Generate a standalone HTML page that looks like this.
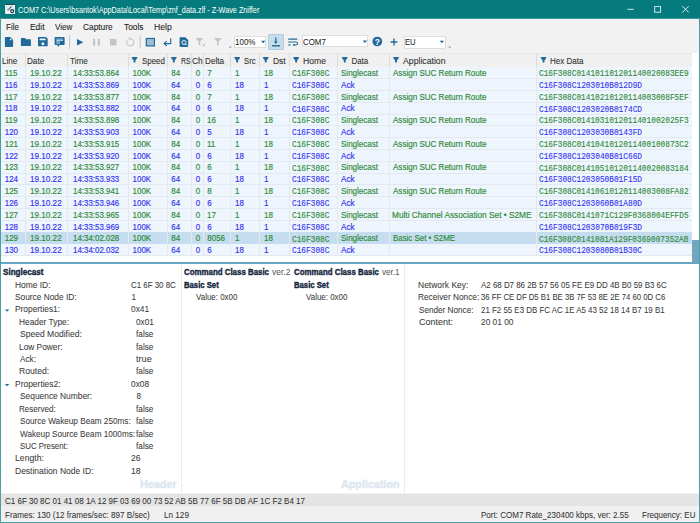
<!DOCTYPE html>
<html><head><meta charset="utf-8"><style>
html,body{margin:0;padding:0;width:700px;height:523px;overflow:hidden;position:relative;}
body>*{position:absolute;}
.t{white-space:pre;-webkit-text-stroke:0.15px currentColor;}
</style></head><body>
<div style="left:0.00px;top:0.00px;width:700.00px;height:523.00px;background:#f2f2f2;"></div>
<div style="left:0.00px;top:0.00px;width:700.00px;height:18.00px;background:#067b7d;"></div>
<div style="left:0.00px;top:18.00px;width:700.00px;height:1.00px;background:#3c9597;"></div>
<div class="t" style="left:18.26px;top:7px;font-size:7.6px;line-height:7.6px;color:#ffffff;font-weight:normal;font-family:'Liberation Sans', sans-serif;transform:scale(0.9562,1.18);transform-origin:0 6px;-webkit-text-stroke:0px currentColor;">COM7 C:\Users\bsantok\AppData\Local\Temp\znf_data.zlf - Z-Wave Zniffer</div>
<div class="t" style="left:6.41px;top:24px;font-size:8.2px;line-height:8.2px;color:#1e1e1e;font-weight:normal;font-family:'Liberation Sans', sans-serif;transform:scale(0.9760,1.1);transform-origin:0 6px;-webkit-text-stroke:0.08px currentColor;">File</div>
<div class="t" style="left:29.59px;top:24px;font-size:8.2px;line-height:8.2px;color:#1e1e1e;font-weight:normal;font-family:'Liberation Sans', sans-serif;transform:scale(1.0255,1.1);transform-origin:0 6px;-webkit-text-stroke:0.08px currentColor;">Edit</div>
<div class="t" style="left:55.10px;top:24px;font-size:8.2px;line-height:8.2px;color:#1e1e1e;font-weight:normal;font-family:'Liberation Sans', sans-serif;transform:scale(0.9803,1.1);transform-origin:0 6px;-webkit-text-stroke:0.08px currentColor;">View</div>
<div class="t" style="left:83.35px;top:24px;font-size:8.2px;line-height:8.2px;color:#1e1e1e;font-weight:normal;font-family:'Liberation Sans', sans-serif;transform:scale(1.0175,1.1);transform-origin:0 6px;-webkit-text-stroke:0.08px currentColor;">Capture</div>
<div class="t" style="left:124.10px;top:24px;font-size:8.2px;line-height:8.2px;color:#1e1e1e;font-weight:normal;font-family:'Liberation Sans', sans-serif;transform:scale(1.0158,1.1);transform-origin:0 6px;-webkit-text-stroke:0.08px currentColor;">Tools</div>
<div class="t" style="left:153.57px;top:24px;font-size:8.2px;line-height:8.2px;color:#1e1e1e;font-weight:normal;font-family:'Liberation Sans', sans-serif;transform:scale(1.0523,1.1);transform-origin:0 6px;-webkit-text-stroke:0.08px currentColor;">Help</div>
<div style="left:234.20px;top:35.50px;width:32.20px;height:12.90px;background:#ffffff;box-sizing:border-box;border:0.6px solid #dedede;"></div>
<div class="t" style="left:235.41px;top:39px;font-size:8.2px;line-height:8.2px;color:#262626;font-weight:normal;font-family:'Liberation Sans', sans-serif;transform:scale(0.9778,1.1);transform-origin:0 6px;-webkit-text-stroke:0.05px currentColor;">100%</div>
<div style="left:268.00px;top:34.20px;width:16.40px;height:15.50px;background:#c5dcea;box-sizing:border-box;border:0.6px solid #b3cde0;"></div>
<div style="left:302.10px;top:35.20px;width:66.10px;height:12.30px;background:#ffffff;box-sizing:border-box;border:0.6px solid #dedede;"></div>
<div class="t" style="left:302.86px;top:39px;font-size:8.2px;line-height:8.2px;color:#262626;font-weight:normal;font-family:'Liberation Sans', sans-serif;transform:scale(0.9634,1.1);transform-origin:0 6px;-webkit-text-stroke:0.05px currentColor;">COM7</div>
<div style="left:403.50px;top:35.50px;width:42.20px;height:13.00px;background:#ffffff;box-sizing:border-box;border:0.6px solid #dedede;"></div>
<div class="t" style="left:404.63px;top:39px;font-size:8.2px;line-height:8.2px;color:#262626;font-weight:normal;font-family:'Liberation Sans', sans-serif;transform:scale(0.9366,1.1);transform-origin:0 6px;-webkit-text-stroke:0.05px currentColor;">EU</div>
<div style="left:1.00px;top:52.70px;width:697.60px;height:209.00px;background:#ffffff;"></div>
<div style="left:1.00px;top:53.00px;width:690.80px;height:13.60px;background:#f0f0f0;box-sizing:border-box;border-top:1px solid #e8e8e8;"></div>
<div style="left:1.00px;top:66.60px;width:690.80px;height:11.81px;background:#eef5fc;"></div>
<div style="left:1.00px;top:78.41px;width:690.80px;height:11.81px;background:#eef5fc;"></div>
<div style="left:1.00px;top:90.22px;width:690.80px;height:11.81px;background:#eef5fc;"></div>
<div style="left:1.00px;top:102.03px;width:690.80px;height:11.81px;background:#eef5fc;"></div>
<div style="left:1.00px;top:113.84px;width:690.80px;height:11.81px;background:#eef5fc;"></div>
<div style="left:1.00px;top:125.65px;width:690.80px;height:11.81px;background:#eef5fc;"></div>
<div style="left:1.00px;top:137.46px;width:690.80px;height:11.81px;background:#eef5fc;"></div>
<div style="left:1.00px;top:149.27px;width:690.80px;height:11.81px;background:#eef5fc;"></div>
<div style="left:1.00px;top:161.08px;width:690.80px;height:11.81px;background:#eef5fc;"></div>
<div style="left:1.00px;top:172.89px;width:690.80px;height:11.81px;background:#eef5fc;"></div>
<div style="left:1.00px;top:184.70px;width:690.80px;height:11.81px;background:#eef5fc;"></div>
<div style="left:1.00px;top:196.51px;width:690.80px;height:11.81px;background:#eef5fc;"></div>
<div style="left:1.00px;top:208.32px;width:690.80px;height:11.81px;background:#eef5fc;"></div>
<div style="left:1.00px;top:220.13px;width:690.80px;height:11.81px;background:#eef5fc;"></div>
<div style="left:1.00px;top:231.94px;width:690.80px;height:11.81px;background:#c5ddee;"></div>
<div style="left:1.00px;top:243.75px;width:690.80px;height:11.81px;background:#eef5fc;"></div>
<div style="left:24.90px;top:54.00px;width:1.00px;height:12.60px;background:#dcdcdc;"></div>
<div style="left:24.90px;top:66.60px;width:1.00px;height:188.96px;background:#e2e9ef;"></div>
<div style="left:66.50px;top:54.00px;width:1.00px;height:12.60px;background:#dcdcdc;"></div>
<div style="left:66.50px;top:66.60px;width:1.00px;height:188.96px;background:#e2e9ef;"></div>
<div style="left:128.40px;top:54.00px;width:1.00px;height:12.60px;background:#dcdcdc;"></div>
<div style="left:128.40px;top:66.60px;width:1.00px;height:188.96px;background:#e2e9ef;"></div>
<div style="left:167.10px;top:54.00px;width:1.00px;height:12.60px;background:#dcdcdc;"></div>
<div style="left:167.10px;top:66.60px;width:1.00px;height:188.96px;background:#e2e9ef;"></div>
<div style="left:191.00px;top:54.00px;width:1.00px;height:12.60px;background:#dcdcdc;"></div>
<div style="left:191.00px;top:66.60px;width:1.00px;height:188.96px;background:#e2e9ef;"></div>
<div style="left:203.10px;top:54.00px;width:1.00px;height:12.60px;background:#dcdcdc;"></div>
<div style="left:203.10px;top:66.60px;width:1.00px;height:188.96px;background:#e2e9ef;"></div>
<div style="left:230.20px;top:54.00px;width:1.00px;height:12.60px;background:#dcdcdc;"></div>
<div style="left:230.20px;top:66.60px;width:1.00px;height:188.96px;background:#e2e9ef;"></div>
<div style="left:259.10px;top:54.00px;width:1.00px;height:12.60px;background:#dcdcdc;"></div>
<div style="left:259.10px;top:66.60px;width:1.00px;height:188.96px;background:#e2e9ef;"></div>
<div style="left:288.50px;top:54.00px;width:1.00px;height:12.60px;background:#dcdcdc;"></div>
<div style="left:288.50px;top:66.60px;width:1.00px;height:188.96px;background:#e2e9ef;"></div>
<div style="left:337.40px;top:54.00px;width:1.00px;height:12.60px;background:#dcdcdc;"></div>
<div style="left:337.40px;top:66.60px;width:1.00px;height:188.96px;background:#e2e9ef;"></div>
<div style="left:388.90px;top:54.00px;width:1.00px;height:12.60px;background:#dcdcdc;"></div>
<div style="left:388.90px;top:66.60px;width:1.00px;height:188.96px;background:#e2e9ef;"></div>
<div style="left:536.40px;top:54.00px;width:1.00px;height:12.60px;background:#dcdcdc;"></div>
<div style="left:536.40px;top:66.60px;width:1.00px;height:188.96px;background:#e2e9ef;"></div>
<div style="left:1.00px;top:78.11px;width:690.80px;height:1.00px;background:#e2e9ef;"></div>
<div style="left:1.00px;top:89.92px;width:690.80px;height:1.00px;background:#e2e9ef;"></div>
<div style="left:1.00px;top:101.73px;width:690.80px;height:1.00px;background:#e2e9ef;"></div>
<div style="left:1.00px;top:113.54px;width:690.80px;height:1.00px;background:#e2e9ef;"></div>
<div style="left:1.00px;top:125.35px;width:690.80px;height:1.00px;background:#e2e9ef;"></div>
<div style="left:1.00px;top:137.16px;width:690.80px;height:1.00px;background:#e2e9ef;"></div>
<div style="left:1.00px;top:148.97px;width:690.80px;height:1.00px;background:#e2e9ef;"></div>
<div style="left:1.00px;top:160.78px;width:690.80px;height:1.00px;background:#e2e9ef;"></div>
<div style="left:1.00px;top:172.59px;width:690.80px;height:1.00px;background:#e2e9ef;"></div>
<div style="left:1.00px;top:184.40px;width:690.80px;height:1.00px;background:#e2e9ef;"></div>
<div style="left:1.00px;top:196.21px;width:690.80px;height:1.00px;background:#e2e9ef;"></div>
<div style="left:1.00px;top:208.02px;width:690.80px;height:1.00px;background:#e2e9ef;"></div>
<div style="left:1.00px;top:219.83px;width:690.80px;height:1.00px;background:#e2e9ef;"></div>
<div style="left:1.00px;top:255.26px;width:690.80px;height:1.00px;background:#e2e9ef;"></div>
<div class="t" style="left:1.69px;top:58px;font-size:8px;line-height:8px;color:#303030;font-weight:normal;font-family:'Liberation Sans', sans-serif;transform:scale(1.0138,1.14);transform-origin:0 6px;-webkit-text-stroke:0.08px currentColor;">Line</div>
<div class="t" style="left:27.09px;top:58px;font-size:8px;line-height:8px;color:#303030;font-weight:normal;font-family:'Liberation Sans', sans-serif;transform:scale(1.0154,1.14);transform-origin:0 6px;-webkit-text-stroke:0.08px currentColor;">Date</div>
<div class="t" style="left:69.80px;top:58px;font-size:8px;line-height:8px;color:#303030;font-weight:normal;font-family:'Liberation Sans', sans-serif;transform:scale(1.0203,1.14);transform-origin:0 6px;-webkit-text-stroke:0.08px currentColor;">Time</div>
<div class="t" style="left:141.65px;top:58px;font-size:8px;line-height:8px;color:#303030;font-weight:normal;font-family:'Liberation Sans', sans-serif;transform:scale(0.9911,1.14);transform-origin:0 6px;-webkit-text-stroke:0.08px currentColor;">Speed</div>
<div class="t" style="left:180.77px;top:58px;font-size:8px;line-height:8px;color:#303030;font-weight:normal;font-family:'Liberation Sans', sans-serif;transform:scale(0.8683,1.14);transform-origin:0 6px;-webkit-text-stroke:0.08px currentColor;">RS</div>
<div class="t" style="left:243.86px;top:58px;font-size:8px;line-height:8px;color:#303030;font-weight:normal;font-family:'Liberation Sans', sans-serif;transform:scale(0.9652,1.14);transform-origin:0 6px;-webkit-text-stroke:0.08px currentColor;">Src</div>
<div class="t" style="left:272.87px;top:58px;font-size:8px;line-height:8px;color:#303030;font-weight:normal;font-family:'Liberation Sans', sans-serif;transform:scale(1.0522,1.14);transform-origin:0 6px;-webkit-text-stroke:0.08px currentColor;">Dst</div>
<div class="t" style="left:302.86px;top:58px;font-size:8px;line-height:8px;color:#303030;font-weight:normal;font-family:'Liberation Sans', sans-serif;transform:scale(1.0780,1.14);transform-origin:0 6px;-webkit-text-stroke:0.08px currentColor;">Home</div>
<div class="t" style="left:351.40px;top:58px;font-size:8px;line-height:8px;color:#303030;font-weight:normal;font-family:'Liberation Sans', sans-serif;transform:scale(1.0000,1.14);transform-origin:0 6px;-webkit-text-stroke:0.08px currentColor;">Data</div>
<div class="t" style="left:403.40px;top:58px;font-size:8px;line-height:8px;color:#303030;font-weight:normal;font-family:'Liberation Sans', sans-serif;transform:scale(1.0865,1.14);transform-origin:0 6px;-webkit-text-stroke:0.08px currentColor;">Application</div>
<div class="t" style="left:550.40px;top:58px;font-size:8px;line-height:8px;color:#303030;font-weight:normal;font-family:'Liberation Sans', sans-serif;transform:scale(1.0061,1.14);transform-origin:0 6px;-webkit-text-stroke:0.08px currentColor;">Hex Data</div>
<div class="t" style="left:192.34px;top:58px;font-size:8px;line-height:8px;color:#303030;font-weight:normal;font-family:'Liberation Sans', sans-serif;transform:scale(1.0526,1.14);transform-origin:0 6px;-webkit-text-stroke:0.08px currentColor;">Ch</div>
<div class="t" style="left:204.99px;top:58px;font-size:8px;line-height:8px;color:#303030;font-weight:normal;font-family:'Liberation Sans', sans-serif;transform:scale(1.0192,1.14);transform-origin:0 6px;-webkit-text-stroke:0.08px currentColor;">Delta</div>
<div class="t" style="left:4.70px;top:70px;font-size:8.0px;line-height:8.0px;color:#2f8a3a;font-weight:normal;font-family:'Liberation Sans', sans-serif;transform:scale(1.0000,1.1);transform-origin:0 6px;">115</div>
<div class="t" style="left:29.99px;top:70px;font-size:8.0px;line-height:8.0px;color:#2f8a3a;font-weight:normal;font-family:'Liberation Sans', sans-serif;transform:scale(1.0165,1.1);transform-origin:0 6px;">19.10.22</div>
<div class="t" style="left:72.51px;top:70px;font-size:8.0px;line-height:8.0px;color:#2f8a3a;font-weight:normal;font-family:'Liberation Sans', sans-serif;transform:scale(0.9891,1.1);transform-origin:0 6px;">14:33:53.864</div>
<div class="t" style="left:132.50px;top:70px;font-size:8.0px;line-height:8.0px;color:#2f8a3a;font-weight:normal;font-family:'Liberation Sans', sans-serif;transform:scale(1.0000,1.1);transform-origin:0 6px;">100K</div>
<div class="t" style="left:171.25px;top:70px;font-size:8.0px;line-height:8.0px;color:#2f8a3a;font-weight:normal;font-family:'Liberation Sans', sans-serif;transform:scale(1.0000,1.1);transform-origin:0 6px;">84</div>
<div class="t" style="left:195.65px;top:70px;font-size:8.0px;line-height:8.0px;color:#2f8a3a;font-weight:normal;font-family:'Liberation Sans', sans-serif;transform:scale(1.0000,1.1);transform-origin:0 6px;">0</div>
<div class="t" style="left:207.25px;top:70px;font-size:8.0px;line-height:8.0px;color:#2f8a3a;font-weight:normal;font-family:'Liberation Sans', sans-serif;transform:scale(1.0000,1.1);transform-origin:0 6px;">7</div>
<div class="t" style="left:235.00px;top:70px;font-size:8.0px;line-height:8.0px;color:#2f8a3a;font-weight:normal;font-family:'Liberation Sans', sans-serif;transform:scale(1.0000,1.1);transform-origin:0 6px;">1</div>
<div class="t" style="left:264.00px;top:70px;font-size:8.0px;line-height:8.0px;color:#2f8a3a;font-weight:normal;font-family:'Liberation Sans', sans-serif;transform:scale(1.0000,1.1);transform-origin:0 6px;">18</div>
<div class="t" style="left:292.15px;top:71px;font-size:7.77px;line-height:7.77px;color:#2f8a3a;font-weight:normal;font-family:'Liberation Mono', monospace;transform:scale(1.0041,1.12);transform-origin:0 5px;-webkit-text-stroke:0.1px currentColor;">C16F308C</div>
<div class="t" style="left:340.95px;top:70px;font-size:8.0px;line-height:8.0px;color:#2f8a3a;font-weight:normal;font-family:'Liberation Sans', sans-serif;transform:scale(1.0041,1.1);transform-origin:0 6px;">Singlecast</div>
<div class="t" style="left:393.00px;top:70px;font-size:8.0px;line-height:8.0px;color:#2f8a3a;font-weight:normal;font-family:'Liberation Sans', sans-serif;transform:scale(1.0054,1.1);transform-origin:0 6px;">Assign SUC Return Route</div>
<div class="t" style="left:539.35px;top:71px;font-size:7.77px;line-height:7.77px;color:#2f8a3a;font-weight:normal;font-family:'Liberation Mono', monospace;transform:scale(1.0034,1.12);transform-origin:0 5px;-webkit-text-stroke:0.1px currentColor;">C16F308C014101101201140020083EE9</div>
<div class="t" style="left:4.70px;top:82px;font-size:8.0px;line-height:8.0px;color:#3636f0;font-weight:normal;font-family:'Liberation Sans', sans-serif;transform:scale(1.0000,1.1);transform-origin:0 6px;">116</div>
<div class="t" style="left:29.99px;top:82px;font-size:8.0px;line-height:8.0px;color:#3636f0;font-weight:normal;font-family:'Liberation Sans', sans-serif;transform:scale(1.0165,1.1);transform-origin:0 6px;">19.10.22</div>
<div class="t" style="left:72.51px;top:82px;font-size:8.0px;line-height:8.0px;color:#3636f0;font-weight:normal;font-family:'Liberation Sans', sans-serif;transform:scale(0.9891,1.1);transform-origin:0 6px;">14:33:53.869</div>
<div class="t" style="left:132.50px;top:82px;font-size:8.0px;line-height:8.0px;color:#3636f0;font-weight:normal;font-family:'Liberation Sans', sans-serif;transform:scale(1.0000,1.1);transform-origin:0 6px;">100K</div>
<div class="t" style="left:171.25px;top:82px;font-size:8.0px;line-height:8.0px;color:#3636f0;font-weight:normal;font-family:'Liberation Sans', sans-serif;transform:scale(1.0000,1.1);transform-origin:0 6px;">64</div>
<div class="t" style="left:195.65px;top:82px;font-size:8.0px;line-height:8.0px;color:#3636f0;font-weight:normal;font-family:'Liberation Sans', sans-serif;transform:scale(1.0000,1.1);transform-origin:0 6px;">0</div>
<div class="t" style="left:207.25px;top:82px;font-size:8.0px;line-height:8.0px;color:#3636f0;font-weight:normal;font-family:'Liberation Sans', sans-serif;transform:scale(1.0000,1.1);transform-origin:0 6px;">6</div>
<div class="t" style="left:235.00px;top:82px;font-size:8.0px;line-height:8.0px;color:#3636f0;font-weight:normal;font-family:'Liberation Sans', sans-serif;transform:scale(1.0000,1.1);transform-origin:0 6px;">18</div>
<div class="t" style="left:264.00px;top:82px;font-size:8.0px;line-height:8.0px;color:#3636f0;font-weight:normal;font-family:'Liberation Sans', sans-serif;transform:scale(1.0000,1.1);transform-origin:0 6px;">1</div>
<div class="t" style="left:292.15px;top:83px;font-size:7.77px;line-height:7.77px;color:#3636f0;font-weight:normal;font-family:'Liberation Mono', monospace;transform:scale(1.0041,1.12);transform-origin:0 5px;-webkit-text-stroke:0.1px currentColor;">C16F308C</div>
<div class="t" style="left:341.20px;top:82px;font-size:8.0px;line-height:8.0px;color:#3636f0;font-weight:normal;font-family:'Liberation Sans', sans-serif;transform:scale(1.0189,1.1);transform-origin:0 6px;">Ack</div>
<div class="t" style="left:539.35px;top:83px;font-size:7.77px;line-height:7.77px;color:#3636f0;font-weight:normal;font-family:'Liberation Mono', monospace;transform:scale(1.0049,1.12);transform-origin:0 5px;-webkit-text-stroke:0.1px currentColor;">C16F308C1203010B012D9D</div>
<div class="t" style="left:4.70px;top:94px;font-size:8.0px;line-height:8.0px;color:#2f8a3a;font-weight:normal;font-family:'Liberation Sans', sans-serif;transform:scale(1.0000,1.1);transform-origin:0 6px;">117</div>
<div class="t" style="left:29.99px;top:94px;font-size:8.0px;line-height:8.0px;color:#2f8a3a;font-weight:normal;font-family:'Liberation Sans', sans-serif;transform:scale(1.0165,1.1);transform-origin:0 6px;">19.10.22</div>
<div class="t" style="left:72.51px;top:94px;font-size:8.0px;line-height:8.0px;color:#2f8a3a;font-weight:normal;font-family:'Liberation Sans', sans-serif;transform:scale(0.9891,1.1);transform-origin:0 6px;">14:33:53.877</div>
<div class="t" style="left:132.50px;top:94px;font-size:8.0px;line-height:8.0px;color:#2f8a3a;font-weight:normal;font-family:'Liberation Sans', sans-serif;transform:scale(1.0000,1.1);transform-origin:0 6px;">100K</div>
<div class="t" style="left:171.25px;top:94px;font-size:8.0px;line-height:8.0px;color:#2f8a3a;font-weight:normal;font-family:'Liberation Sans', sans-serif;transform:scale(1.0000,1.1);transform-origin:0 6px;">84</div>
<div class="t" style="left:195.65px;top:94px;font-size:8.0px;line-height:8.0px;color:#2f8a3a;font-weight:normal;font-family:'Liberation Sans', sans-serif;transform:scale(1.0000,1.1);transform-origin:0 6px;">0</div>
<div class="t" style="left:207.25px;top:94px;font-size:8.0px;line-height:8.0px;color:#2f8a3a;font-weight:normal;font-family:'Liberation Sans', sans-serif;transform:scale(1.0000,1.1);transform-origin:0 6px;">7</div>
<div class="t" style="left:235.00px;top:94px;font-size:8.0px;line-height:8.0px;color:#2f8a3a;font-weight:normal;font-family:'Liberation Sans', sans-serif;transform:scale(1.0000,1.1);transform-origin:0 6px;">1</div>
<div class="t" style="left:264.00px;top:94px;font-size:8.0px;line-height:8.0px;color:#2f8a3a;font-weight:normal;font-family:'Liberation Sans', sans-serif;transform:scale(1.0000,1.1);transform-origin:0 6px;">18</div>
<div class="t" style="left:292.15px;top:95px;font-size:7.77px;line-height:7.77px;color:#2f8a3a;font-weight:normal;font-family:'Liberation Mono', monospace;transform:scale(1.0041,1.12);transform-origin:0 5px;-webkit-text-stroke:0.1px currentColor;">C16F308C</div>
<div class="t" style="left:340.95px;top:94px;font-size:8.0px;line-height:8.0px;color:#2f8a3a;font-weight:normal;font-family:'Liberation Sans', sans-serif;transform:scale(1.0041,1.1);transform-origin:0 6px;">Singlecast</div>
<div class="t" style="left:393.00px;top:94px;font-size:8.0px;line-height:8.0px;color:#2f8a3a;font-weight:normal;font-family:'Liberation Sans', sans-serif;transform:scale(1.0054,1.1);transform-origin:0 6px;">Assign SUC Return Route</div>
<div class="t" style="left:539.35px;top:95px;font-size:7.77px;line-height:7.77px;color:#2f8a3a;font-weight:normal;font-family:'Liberation Mono', monospace;transform:scale(1.0034,1.12);transform-origin:0 5px;-webkit-text-stroke:0.1px currentColor;">C16F308C01410210120114003008F5EF</div>
<div class="t" style="left:4.70px;top:105px;font-size:8.0px;line-height:8.0px;color:#3636f0;font-weight:normal;font-family:'Liberation Sans', sans-serif;transform:scale(1.0000,1.1);transform-origin:0 6px;">118</div>
<div class="t" style="left:29.99px;top:105px;font-size:8.0px;line-height:8.0px;color:#3636f0;font-weight:normal;font-family:'Liberation Sans', sans-serif;transform:scale(1.0165,1.1);transform-origin:0 6px;">19.10.22</div>
<div class="t" style="left:72.51px;top:105px;font-size:8.0px;line-height:8.0px;color:#3636f0;font-weight:normal;font-family:'Liberation Sans', sans-serif;transform:scale(0.9891,1.1);transform-origin:0 6px;">14:33:53.882</div>
<div class="t" style="left:132.50px;top:105px;font-size:8.0px;line-height:8.0px;color:#3636f0;font-weight:normal;font-family:'Liberation Sans', sans-serif;transform:scale(1.0000,1.1);transform-origin:0 6px;">100K</div>
<div class="t" style="left:171.25px;top:105px;font-size:8.0px;line-height:8.0px;color:#3636f0;font-weight:normal;font-family:'Liberation Sans', sans-serif;transform:scale(1.0000,1.1);transform-origin:0 6px;">64</div>
<div class="t" style="left:195.65px;top:105px;font-size:8.0px;line-height:8.0px;color:#3636f0;font-weight:normal;font-family:'Liberation Sans', sans-serif;transform:scale(1.0000,1.1);transform-origin:0 6px;">0</div>
<div class="t" style="left:207.25px;top:105px;font-size:8.0px;line-height:8.0px;color:#3636f0;font-weight:normal;font-family:'Liberation Sans', sans-serif;transform:scale(1.0000,1.1);transform-origin:0 6px;">6</div>
<div class="t" style="left:235.00px;top:105px;font-size:8.0px;line-height:8.0px;color:#3636f0;font-weight:normal;font-family:'Liberation Sans', sans-serif;transform:scale(1.0000,1.1);transform-origin:0 6px;">18</div>
<div class="t" style="left:264.00px;top:105px;font-size:8.0px;line-height:8.0px;color:#3636f0;font-weight:normal;font-family:'Liberation Sans', sans-serif;transform:scale(1.0000,1.1);transform-origin:0 6px;">1</div>
<div class="t" style="left:292.15px;top:107px;font-size:7.77px;line-height:7.77px;color:#3636f0;font-weight:normal;font-family:'Liberation Mono', monospace;transform:scale(1.0041,1.12);transform-origin:0 5px;-webkit-text-stroke:0.1px currentColor;">C16F308C</div>
<div class="t" style="left:341.20px;top:105px;font-size:8.0px;line-height:8.0px;color:#3636f0;font-weight:normal;font-family:'Liberation Sans', sans-serif;transform:scale(1.0189,1.1);transform-origin:0 6px;">Ack</div>
<div class="t" style="left:539.35px;top:107px;font-size:7.77px;line-height:7.77px;color:#3636f0;font-weight:normal;font-family:'Liberation Mono', monospace;transform:scale(1.0049,1.12);transform-origin:0 5px;-webkit-text-stroke:0.1px currentColor;">C16F308C1203020B0174CD</div>
<div class="t" style="left:4.70px;top:117px;font-size:8.0px;line-height:8.0px;color:#2f8a3a;font-weight:normal;font-family:'Liberation Sans', sans-serif;transform:scale(1.0000,1.1);transform-origin:0 6px;">119</div>
<div class="t" style="left:29.99px;top:117px;font-size:8.0px;line-height:8.0px;color:#2f8a3a;font-weight:normal;font-family:'Liberation Sans', sans-serif;transform:scale(1.0165,1.1);transform-origin:0 6px;">19.10.22</div>
<div class="t" style="left:72.51px;top:117px;font-size:8.0px;line-height:8.0px;color:#2f8a3a;font-weight:normal;font-family:'Liberation Sans', sans-serif;transform:scale(0.9891,1.1);transform-origin:0 6px;">14:33:53.898</div>
<div class="t" style="left:132.50px;top:117px;font-size:8.0px;line-height:8.0px;color:#2f8a3a;font-weight:normal;font-family:'Liberation Sans', sans-serif;transform:scale(1.0000,1.1);transform-origin:0 6px;">100K</div>
<div class="t" style="left:171.25px;top:117px;font-size:8.0px;line-height:8.0px;color:#2f8a3a;font-weight:normal;font-family:'Liberation Sans', sans-serif;transform:scale(1.0000,1.1);transform-origin:0 6px;">84</div>
<div class="t" style="left:195.65px;top:117px;font-size:8.0px;line-height:8.0px;color:#2f8a3a;font-weight:normal;font-family:'Liberation Sans', sans-serif;transform:scale(1.0000,1.1);transform-origin:0 6px;">0</div>
<div class="t" style="left:207.00px;top:117px;font-size:8.0px;line-height:8.0px;color:#2f8a3a;font-weight:normal;font-family:'Liberation Sans', sans-serif;transform:scale(1.0000,1.1);transform-origin:0 6px;">16</div>
<div class="t" style="left:235.00px;top:117px;font-size:8.0px;line-height:8.0px;color:#2f8a3a;font-weight:normal;font-family:'Liberation Sans', sans-serif;transform:scale(1.0000,1.1);transform-origin:0 6px;">1</div>
<div class="t" style="left:264.00px;top:117px;font-size:8.0px;line-height:8.0px;color:#2f8a3a;font-weight:normal;font-family:'Liberation Sans', sans-serif;transform:scale(1.0000,1.1);transform-origin:0 6px;">18</div>
<div class="t" style="left:292.15px;top:118px;font-size:7.77px;line-height:7.77px;color:#2f8a3a;font-weight:normal;font-family:'Liberation Mono', monospace;transform:scale(1.0041,1.12);transform-origin:0 5px;-webkit-text-stroke:0.1px currentColor;">C16F308C</div>
<div class="t" style="left:340.95px;top:117px;font-size:8.0px;line-height:8.0px;color:#2f8a3a;font-weight:normal;font-family:'Liberation Sans', sans-serif;transform:scale(1.0041,1.1);transform-origin:0 6px;">Singlecast</div>
<div class="t" style="left:393.00px;top:117px;font-size:8.0px;line-height:8.0px;color:#2f8a3a;font-weight:normal;font-family:'Liberation Sans', sans-serif;transform:scale(1.0054,1.1);transform-origin:0 6px;">Assign SUC Return Route</div>
<div class="t" style="left:539.35px;top:118px;font-size:7.77px;line-height:7.77px;color:#2f8a3a;font-weight:normal;font-family:'Liberation Mono', monospace;transform:scale(1.0034,1.12);transform-origin:0 5px;-webkit-text-stroke:0.1px currentColor;">C16F308C0141031012011401002025F3</div>
<div class="t" style="left:4.70px;top:129px;font-size:8.0px;line-height:8.0px;color:#3636f0;font-weight:normal;font-family:'Liberation Sans', sans-serif;transform:scale(1.0000,1.1);transform-origin:0 6px;">120</div>
<div class="t" style="left:29.99px;top:129px;font-size:8.0px;line-height:8.0px;color:#3636f0;font-weight:normal;font-family:'Liberation Sans', sans-serif;transform:scale(1.0165,1.1);transform-origin:0 6px;">19.10.22</div>
<div class="t" style="left:72.51px;top:129px;font-size:8.0px;line-height:8.0px;color:#3636f0;font-weight:normal;font-family:'Liberation Sans', sans-serif;transform:scale(0.9891,1.1);transform-origin:0 6px;">14:33:53.903</div>
<div class="t" style="left:132.50px;top:129px;font-size:8.0px;line-height:8.0px;color:#3636f0;font-weight:normal;font-family:'Liberation Sans', sans-serif;transform:scale(1.0000,1.1);transform-origin:0 6px;">100K</div>
<div class="t" style="left:171.25px;top:129px;font-size:8.0px;line-height:8.0px;color:#3636f0;font-weight:normal;font-family:'Liberation Sans', sans-serif;transform:scale(1.0000,1.1);transform-origin:0 6px;">64</div>
<div class="t" style="left:195.65px;top:129px;font-size:8.0px;line-height:8.0px;color:#3636f0;font-weight:normal;font-family:'Liberation Sans', sans-serif;transform:scale(1.0000,1.1);transform-origin:0 6px;">0</div>
<div class="t" style="left:207.25px;top:129px;font-size:8.0px;line-height:8.0px;color:#3636f0;font-weight:normal;font-family:'Liberation Sans', sans-serif;transform:scale(1.0000,1.1);transform-origin:0 6px;">5</div>
<div class="t" style="left:235.00px;top:129px;font-size:8.0px;line-height:8.0px;color:#3636f0;font-weight:normal;font-family:'Liberation Sans', sans-serif;transform:scale(1.0000,1.1);transform-origin:0 6px;">18</div>
<div class="t" style="left:264.00px;top:129px;font-size:8.0px;line-height:8.0px;color:#3636f0;font-weight:normal;font-family:'Liberation Sans', sans-serif;transform:scale(1.0000,1.1);transform-origin:0 6px;">1</div>
<div class="t" style="left:292.15px;top:130px;font-size:7.77px;line-height:7.77px;color:#3636f0;font-weight:normal;font-family:'Liberation Mono', monospace;transform:scale(1.0041,1.12);transform-origin:0 5px;-webkit-text-stroke:0.1px currentColor;">C16F308C</div>
<div class="t" style="left:341.20px;top:129px;font-size:8.0px;line-height:8.0px;color:#3636f0;font-weight:normal;font-family:'Liberation Sans', sans-serif;transform:scale(1.0189,1.1);transform-origin:0 6px;">Ack</div>
<div class="t" style="left:539.35px;top:130px;font-size:7.77px;line-height:7.77px;color:#3636f0;font-weight:normal;font-family:'Liberation Mono', monospace;transform:scale(1.0049,1.12);transform-origin:0 5px;-webkit-text-stroke:0.1px currentColor;">C16F308C1203030B0143FD</div>
<div class="t" style="left:4.70px;top:141px;font-size:8.0px;line-height:8.0px;color:#2f8a3a;font-weight:normal;font-family:'Liberation Sans', sans-serif;transform:scale(1.0000,1.1);transform-origin:0 6px;">121</div>
<div class="t" style="left:29.99px;top:141px;font-size:8.0px;line-height:8.0px;color:#2f8a3a;font-weight:normal;font-family:'Liberation Sans', sans-serif;transform:scale(1.0165,1.1);transform-origin:0 6px;">19.10.22</div>
<div class="t" style="left:72.51px;top:141px;font-size:8.0px;line-height:8.0px;color:#2f8a3a;font-weight:normal;font-family:'Liberation Sans', sans-serif;transform:scale(0.9891,1.1);transform-origin:0 6px;">14:33:53.915</div>
<div class="t" style="left:132.50px;top:141px;font-size:8.0px;line-height:8.0px;color:#2f8a3a;font-weight:normal;font-family:'Liberation Sans', sans-serif;transform:scale(1.0000,1.1);transform-origin:0 6px;">100K</div>
<div class="t" style="left:171.25px;top:141px;font-size:8.0px;line-height:8.0px;color:#2f8a3a;font-weight:normal;font-family:'Liberation Sans', sans-serif;transform:scale(1.0000,1.1);transform-origin:0 6px;">84</div>
<div class="t" style="left:195.65px;top:141px;font-size:8.0px;line-height:8.0px;color:#2f8a3a;font-weight:normal;font-family:'Liberation Sans', sans-serif;transform:scale(1.0000,1.1);transform-origin:0 6px;">0</div>
<div class="t" style="left:207.00px;top:141px;font-size:8.0px;line-height:8.0px;color:#2f8a3a;font-weight:normal;font-family:'Liberation Sans', sans-serif;transform:scale(1.0000,1.1);transform-origin:0 6px;">11</div>
<div class="t" style="left:235.00px;top:141px;font-size:8.0px;line-height:8.0px;color:#2f8a3a;font-weight:normal;font-family:'Liberation Sans', sans-serif;transform:scale(1.0000,1.1);transform-origin:0 6px;">1</div>
<div class="t" style="left:264.00px;top:141px;font-size:8.0px;line-height:8.0px;color:#2f8a3a;font-weight:normal;font-family:'Liberation Sans', sans-serif;transform:scale(1.0000,1.1);transform-origin:0 6px;">18</div>
<div class="t" style="left:292.15px;top:142px;font-size:7.77px;line-height:7.77px;color:#2f8a3a;font-weight:normal;font-family:'Liberation Mono', monospace;transform:scale(1.0041,1.12);transform-origin:0 5px;-webkit-text-stroke:0.1px currentColor;">C16F308C</div>
<div class="t" style="left:340.95px;top:141px;font-size:8.0px;line-height:8.0px;color:#2f8a3a;font-weight:normal;font-family:'Liberation Sans', sans-serif;transform:scale(1.0041,1.1);transform-origin:0 6px;">Singlecast</div>
<div class="t" style="left:393.00px;top:141px;font-size:8.0px;line-height:8.0px;color:#2f8a3a;font-weight:normal;font-family:'Liberation Sans', sans-serif;transform:scale(1.0054,1.1);transform-origin:0 6px;">Assign SUC Return Route</div>
<div class="t" style="left:539.35px;top:142px;font-size:7.77px;line-height:7.77px;color:#2f8a3a;font-weight:normal;font-family:'Liberation Mono', monospace;transform:scale(1.0034,1.12);transform-origin:0 5px;-webkit-text-stroke:0.1px currentColor;">C16F308C0141041012011400100873C2</div>
<div class="t" style="left:4.70px;top:153px;font-size:8.0px;line-height:8.0px;color:#3636f0;font-weight:normal;font-family:'Liberation Sans', sans-serif;transform:scale(1.0000,1.1);transform-origin:0 6px;">122</div>
<div class="t" style="left:29.99px;top:153px;font-size:8.0px;line-height:8.0px;color:#3636f0;font-weight:normal;font-family:'Liberation Sans', sans-serif;transform:scale(1.0165,1.1);transform-origin:0 6px;">19.10.22</div>
<div class="t" style="left:72.51px;top:153px;font-size:8.0px;line-height:8.0px;color:#3636f0;font-weight:normal;font-family:'Liberation Sans', sans-serif;transform:scale(0.9891,1.1);transform-origin:0 6px;">14:33:53.920</div>
<div class="t" style="left:132.50px;top:153px;font-size:8.0px;line-height:8.0px;color:#3636f0;font-weight:normal;font-family:'Liberation Sans', sans-serif;transform:scale(1.0000,1.1);transform-origin:0 6px;">100K</div>
<div class="t" style="left:171.25px;top:153px;font-size:8.0px;line-height:8.0px;color:#3636f0;font-weight:normal;font-family:'Liberation Sans', sans-serif;transform:scale(1.0000,1.1);transform-origin:0 6px;">64</div>
<div class="t" style="left:195.65px;top:153px;font-size:8.0px;line-height:8.0px;color:#3636f0;font-weight:normal;font-family:'Liberation Sans', sans-serif;transform:scale(1.0000,1.1);transform-origin:0 6px;">0</div>
<div class="t" style="left:207.25px;top:153px;font-size:8.0px;line-height:8.0px;color:#3636f0;font-weight:normal;font-family:'Liberation Sans', sans-serif;transform:scale(1.0000,1.1);transform-origin:0 6px;">6</div>
<div class="t" style="left:235.00px;top:153px;font-size:8.0px;line-height:8.0px;color:#3636f0;font-weight:normal;font-family:'Liberation Sans', sans-serif;transform:scale(1.0000,1.1);transform-origin:0 6px;">18</div>
<div class="t" style="left:264.00px;top:153px;font-size:8.0px;line-height:8.0px;color:#3636f0;font-weight:normal;font-family:'Liberation Sans', sans-serif;transform:scale(1.0000,1.1);transform-origin:0 6px;">1</div>
<div class="t" style="left:292.15px;top:154px;font-size:7.77px;line-height:7.77px;color:#3636f0;font-weight:normal;font-family:'Liberation Mono', monospace;transform:scale(1.0041,1.12);transform-origin:0 5px;-webkit-text-stroke:0.1px currentColor;">C16F308C</div>
<div class="t" style="left:341.20px;top:153px;font-size:8.0px;line-height:8.0px;color:#3636f0;font-weight:normal;font-family:'Liberation Sans', sans-serif;transform:scale(1.0189,1.1);transform-origin:0 6px;">Ack</div>
<div class="t" style="left:539.35px;top:154px;font-size:7.77px;line-height:7.77px;color:#3636f0;font-weight:normal;font-family:'Liberation Mono', monospace;transform:scale(1.0049,1.12);transform-origin:0 5px;-webkit-text-stroke:0.1px currentColor;">C16F308C1203040B01C66D</div>
<div class="t" style="left:4.70px;top:164px;font-size:8.0px;line-height:8.0px;color:#2f8a3a;font-weight:normal;font-family:'Liberation Sans', sans-serif;transform:scale(1.0000,1.1);transform-origin:0 6px;">123</div>
<div class="t" style="left:29.99px;top:164px;font-size:8.0px;line-height:8.0px;color:#2f8a3a;font-weight:normal;font-family:'Liberation Sans', sans-serif;transform:scale(1.0165,1.1);transform-origin:0 6px;">19.10.22</div>
<div class="t" style="left:72.51px;top:164px;font-size:8.0px;line-height:8.0px;color:#2f8a3a;font-weight:normal;font-family:'Liberation Sans', sans-serif;transform:scale(0.9891,1.1);transform-origin:0 6px;">14:33:53.927</div>
<div class="t" style="left:132.50px;top:164px;font-size:8.0px;line-height:8.0px;color:#2f8a3a;font-weight:normal;font-family:'Liberation Sans', sans-serif;transform:scale(1.0000,1.1);transform-origin:0 6px;">100K</div>
<div class="t" style="left:171.25px;top:164px;font-size:8.0px;line-height:8.0px;color:#2f8a3a;font-weight:normal;font-family:'Liberation Sans', sans-serif;transform:scale(1.0000,1.1);transform-origin:0 6px;">84</div>
<div class="t" style="left:195.65px;top:164px;font-size:8.0px;line-height:8.0px;color:#2f8a3a;font-weight:normal;font-family:'Liberation Sans', sans-serif;transform:scale(1.0000,1.1);transform-origin:0 6px;">0</div>
<div class="t" style="left:207.25px;top:164px;font-size:8.0px;line-height:8.0px;color:#2f8a3a;font-weight:normal;font-family:'Liberation Sans', sans-serif;transform:scale(1.0000,1.1);transform-origin:0 6px;">6</div>
<div class="t" style="left:235.00px;top:164px;font-size:8.0px;line-height:8.0px;color:#2f8a3a;font-weight:normal;font-family:'Liberation Sans', sans-serif;transform:scale(1.0000,1.1);transform-origin:0 6px;">1</div>
<div class="t" style="left:264.00px;top:164px;font-size:8.0px;line-height:8.0px;color:#2f8a3a;font-weight:normal;font-family:'Liberation Sans', sans-serif;transform:scale(1.0000,1.1);transform-origin:0 6px;">18</div>
<div class="t" style="left:292.15px;top:166px;font-size:7.77px;line-height:7.77px;color:#2f8a3a;font-weight:normal;font-family:'Liberation Mono', monospace;transform:scale(1.0041,1.12);transform-origin:0 5px;-webkit-text-stroke:0.1px currentColor;">C16F308C</div>
<div class="t" style="left:340.95px;top:164px;font-size:8.0px;line-height:8.0px;color:#2f8a3a;font-weight:normal;font-family:'Liberation Sans', sans-serif;transform:scale(1.0041,1.1);transform-origin:0 6px;">Singlecast</div>
<div class="t" style="left:393.00px;top:164px;font-size:8.0px;line-height:8.0px;color:#2f8a3a;font-weight:normal;font-family:'Liberation Sans', sans-serif;transform:scale(1.0054,1.1);transform-origin:0 6px;">Assign SUC Return Route</div>
<div class="t" style="left:539.35px;top:166px;font-size:7.77px;line-height:7.77px;color:#2f8a3a;font-weight:normal;font-family:'Liberation Mono', monospace;transform:scale(1.0034,1.12);transform-origin:0 5px;-webkit-text-stroke:0.1px currentColor;">C16F308C014105101201140020083184</div>
<div class="t" style="left:4.70px;top:176px;font-size:8.0px;line-height:8.0px;color:#3636f0;font-weight:normal;font-family:'Liberation Sans', sans-serif;transform:scale(1.0000,1.1);transform-origin:0 6px;">124</div>
<div class="t" style="left:29.99px;top:176px;font-size:8.0px;line-height:8.0px;color:#3636f0;font-weight:normal;font-family:'Liberation Sans', sans-serif;transform:scale(1.0165,1.1);transform-origin:0 6px;">19.10.22</div>
<div class="t" style="left:72.51px;top:176px;font-size:8.0px;line-height:8.0px;color:#3636f0;font-weight:normal;font-family:'Liberation Sans', sans-serif;transform:scale(0.9891,1.1);transform-origin:0 6px;">14:33:53.933</div>
<div class="t" style="left:132.50px;top:176px;font-size:8.0px;line-height:8.0px;color:#3636f0;font-weight:normal;font-family:'Liberation Sans', sans-serif;transform:scale(1.0000,1.1);transform-origin:0 6px;">100K</div>
<div class="t" style="left:171.25px;top:176px;font-size:8.0px;line-height:8.0px;color:#3636f0;font-weight:normal;font-family:'Liberation Sans', sans-serif;transform:scale(1.0000,1.1);transform-origin:0 6px;">64</div>
<div class="t" style="left:195.65px;top:176px;font-size:8.0px;line-height:8.0px;color:#3636f0;font-weight:normal;font-family:'Liberation Sans', sans-serif;transform:scale(1.0000,1.1);transform-origin:0 6px;">0</div>
<div class="t" style="left:207.25px;top:176px;font-size:8.0px;line-height:8.0px;color:#3636f0;font-weight:normal;font-family:'Liberation Sans', sans-serif;transform:scale(1.0000,1.1);transform-origin:0 6px;">6</div>
<div class="t" style="left:235.00px;top:176px;font-size:8.0px;line-height:8.0px;color:#3636f0;font-weight:normal;font-family:'Liberation Sans', sans-serif;transform:scale(1.0000,1.1);transform-origin:0 6px;">18</div>
<div class="t" style="left:264.00px;top:176px;font-size:8.0px;line-height:8.0px;color:#3636f0;font-weight:normal;font-family:'Liberation Sans', sans-serif;transform:scale(1.0000,1.1);transform-origin:0 6px;">1</div>
<div class="t" style="left:292.15px;top:177px;font-size:7.77px;line-height:7.77px;color:#3636f0;font-weight:normal;font-family:'Liberation Mono', monospace;transform:scale(1.0041,1.12);transform-origin:0 5px;-webkit-text-stroke:0.1px currentColor;">C16F308C</div>
<div class="t" style="left:341.20px;top:176px;font-size:8.0px;line-height:8.0px;color:#3636f0;font-weight:normal;font-family:'Liberation Sans', sans-serif;transform:scale(1.0189,1.1);transform-origin:0 6px;">Ack</div>
<div class="t" style="left:539.35px;top:177px;font-size:7.77px;line-height:7.77px;color:#3636f0;font-weight:normal;font-family:'Liberation Mono', monospace;transform:scale(1.0049,1.12);transform-origin:0 5px;-webkit-text-stroke:0.1px currentColor;">C16F308C1203050B01F15D</div>
<div class="t" style="left:4.70px;top:188px;font-size:8.0px;line-height:8.0px;color:#2f8a3a;font-weight:normal;font-family:'Liberation Sans', sans-serif;transform:scale(1.0000,1.1);transform-origin:0 6px;">125</div>
<div class="t" style="left:29.99px;top:188px;font-size:8.0px;line-height:8.0px;color:#2f8a3a;font-weight:normal;font-family:'Liberation Sans', sans-serif;transform:scale(1.0165,1.1);transform-origin:0 6px;">19.10.22</div>
<div class="t" style="left:72.51px;top:188px;font-size:8.0px;line-height:8.0px;color:#2f8a3a;font-weight:normal;font-family:'Liberation Sans', sans-serif;transform:scale(0.9891,1.1);transform-origin:0 6px;">14:33:53.941</div>
<div class="t" style="left:132.50px;top:188px;font-size:8.0px;line-height:8.0px;color:#2f8a3a;font-weight:normal;font-family:'Liberation Sans', sans-serif;transform:scale(1.0000,1.1);transform-origin:0 6px;">100K</div>
<div class="t" style="left:171.25px;top:188px;font-size:8.0px;line-height:8.0px;color:#2f8a3a;font-weight:normal;font-family:'Liberation Sans', sans-serif;transform:scale(1.0000,1.1);transform-origin:0 6px;">84</div>
<div class="t" style="left:195.65px;top:188px;font-size:8.0px;line-height:8.0px;color:#2f8a3a;font-weight:normal;font-family:'Liberation Sans', sans-serif;transform:scale(1.0000,1.1);transform-origin:0 6px;">0</div>
<div class="t" style="left:207.25px;top:188px;font-size:8.0px;line-height:8.0px;color:#2f8a3a;font-weight:normal;font-family:'Liberation Sans', sans-serif;transform:scale(1.0000,1.1);transform-origin:0 6px;">8</div>
<div class="t" style="left:235.00px;top:188px;font-size:8.0px;line-height:8.0px;color:#2f8a3a;font-weight:normal;font-family:'Liberation Sans', sans-serif;transform:scale(1.0000,1.1);transform-origin:0 6px;">1</div>
<div class="t" style="left:264.00px;top:188px;font-size:8.0px;line-height:8.0px;color:#2f8a3a;font-weight:normal;font-family:'Liberation Sans', sans-serif;transform:scale(1.0000,1.1);transform-origin:0 6px;">18</div>
<div class="t" style="left:292.15px;top:189px;font-size:7.77px;line-height:7.77px;color:#2f8a3a;font-weight:normal;font-family:'Liberation Mono', monospace;transform:scale(1.0041,1.12);transform-origin:0 5px;-webkit-text-stroke:0.1px currentColor;">C16F308C</div>
<div class="t" style="left:340.95px;top:188px;font-size:8.0px;line-height:8.0px;color:#2f8a3a;font-weight:normal;font-family:'Liberation Sans', sans-serif;transform:scale(1.0041,1.1);transform-origin:0 6px;">Singlecast</div>
<div class="t" style="left:393.00px;top:188px;font-size:8.0px;line-height:8.0px;color:#2f8a3a;font-weight:normal;font-family:'Liberation Sans', sans-serif;transform:scale(1.0054,1.1);transform-origin:0 6px;">Assign SUC Return Route</div>
<div class="t" style="left:539.35px;top:189px;font-size:7.77px;line-height:7.77px;color:#2f8a3a;font-weight:normal;font-family:'Liberation Mono', monospace;transform:scale(1.0034,1.12);transform-origin:0 5px;-webkit-text-stroke:0.1px currentColor;">C16F308C01410610120114003008FA82</div>
<div class="t" style="left:4.70px;top:200px;font-size:8.0px;line-height:8.0px;color:#3636f0;font-weight:normal;font-family:'Liberation Sans', sans-serif;transform:scale(1.0000,1.1);transform-origin:0 6px;">126</div>
<div class="t" style="left:29.99px;top:200px;font-size:8.0px;line-height:8.0px;color:#3636f0;font-weight:normal;font-family:'Liberation Sans', sans-serif;transform:scale(1.0165,1.1);transform-origin:0 6px;">19.10.22</div>
<div class="t" style="left:72.51px;top:200px;font-size:8.0px;line-height:8.0px;color:#3636f0;font-weight:normal;font-family:'Liberation Sans', sans-serif;transform:scale(0.9891,1.1);transform-origin:0 6px;">14:33:53.946</div>
<div class="t" style="left:132.50px;top:200px;font-size:8.0px;line-height:8.0px;color:#3636f0;font-weight:normal;font-family:'Liberation Sans', sans-serif;transform:scale(1.0000,1.1);transform-origin:0 6px;">100K</div>
<div class="t" style="left:171.25px;top:200px;font-size:8.0px;line-height:8.0px;color:#3636f0;font-weight:normal;font-family:'Liberation Sans', sans-serif;transform:scale(1.0000,1.1);transform-origin:0 6px;">64</div>
<div class="t" style="left:195.65px;top:200px;font-size:8.0px;line-height:8.0px;color:#3636f0;font-weight:normal;font-family:'Liberation Sans', sans-serif;transform:scale(1.0000,1.1);transform-origin:0 6px;">0</div>
<div class="t" style="left:207.25px;top:200px;font-size:8.0px;line-height:8.0px;color:#3636f0;font-weight:normal;font-family:'Liberation Sans', sans-serif;transform:scale(1.0000,1.1);transform-origin:0 6px;">6</div>
<div class="t" style="left:235.00px;top:200px;font-size:8.0px;line-height:8.0px;color:#3636f0;font-weight:normal;font-family:'Liberation Sans', sans-serif;transform:scale(1.0000,1.1);transform-origin:0 6px;">18</div>
<div class="t" style="left:264.00px;top:200px;font-size:8.0px;line-height:8.0px;color:#3636f0;font-weight:normal;font-family:'Liberation Sans', sans-serif;transform:scale(1.0000,1.1);transform-origin:0 6px;">1</div>
<div class="t" style="left:292.15px;top:201px;font-size:7.77px;line-height:7.77px;color:#3636f0;font-weight:normal;font-family:'Liberation Mono', monospace;transform:scale(1.0041,1.12);transform-origin:0 5px;-webkit-text-stroke:0.1px currentColor;">C16F308C</div>
<div class="t" style="left:341.20px;top:200px;font-size:8.0px;line-height:8.0px;color:#3636f0;font-weight:normal;font-family:'Liberation Sans', sans-serif;transform:scale(1.0189,1.1);transform-origin:0 6px;">Ack</div>
<div class="t" style="left:539.35px;top:201px;font-size:7.77px;line-height:7.77px;color:#3636f0;font-weight:normal;font-family:'Liberation Mono', monospace;transform:scale(1.0049,1.12);transform-origin:0 5px;-webkit-text-stroke:0.1px currentColor;">C16F308C1203060B01A80D</div>
<div class="t" style="left:4.70px;top:212px;font-size:8.0px;line-height:8.0px;color:#2f8a3a;font-weight:normal;font-family:'Liberation Sans', sans-serif;transform:scale(1.0000,1.1);transform-origin:0 6px;">127</div>
<div class="t" style="left:29.99px;top:212px;font-size:8.0px;line-height:8.0px;color:#2f8a3a;font-weight:normal;font-family:'Liberation Sans', sans-serif;transform:scale(1.0165,1.1);transform-origin:0 6px;">19.10.22</div>
<div class="t" style="left:72.51px;top:212px;font-size:8.0px;line-height:8.0px;color:#2f8a3a;font-weight:normal;font-family:'Liberation Sans', sans-serif;transform:scale(0.9891,1.1);transform-origin:0 6px;">14:33:53.965</div>
<div class="t" style="left:132.50px;top:212px;font-size:8.0px;line-height:8.0px;color:#2f8a3a;font-weight:normal;font-family:'Liberation Sans', sans-serif;transform:scale(1.0000,1.1);transform-origin:0 6px;">100K</div>
<div class="t" style="left:171.25px;top:212px;font-size:8.0px;line-height:8.0px;color:#2f8a3a;font-weight:normal;font-family:'Liberation Sans', sans-serif;transform:scale(1.0000,1.1);transform-origin:0 6px;">84</div>
<div class="t" style="left:195.65px;top:212px;font-size:8.0px;line-height:8.0px;color:#2f8a3a;font-weight:normal;font-family:'Liberation Sans', sans-serif;transform:scale(1.0000,1.1);transform-origin:0 6px;">0</div>
<div class="t" style="left:207.00px;top:212px;font-size:8.0px;line-height:8.0px;color:#2f8a3a;font-weight:normal;font-family:'Liberation Sans', sans-serif;transform:scale(1.0000,1.1);transform-origin:0 6px;">17</div>
<div class="t" style="left:235.00px;top:212px;font-size:8.0px;line-height:8.0px;color:#2f8a3a;font-weight:normal;font-family:'Liberation Sans', sans-serif;transform:scale(1.0000,1.1);transform-origin:0 6px;">1</div>
<div class="t" style="left:264.00px;top:212px;font-size:8.0px;line-height:8.0px;color:#2f8a3a;font-weight:normal;font-family:'Liberation Sans', sans-serif;transform:scale(1.0000,1.1);transform-origin:0 6px;">18</div>
<div class="t" style="left:292.15px;top:213px;font-size:7.77px;line-height:7.77px;color:#2f8a3a;font-weight:normal;font-family:'Liberation Mono', monospace;transform:scale(1.0041,1.12);transform-origin:0 5px;-webkit-text-stroke:0.1px currentColor;">C16F308C</div>
<div class="t" style="left:340.95px;top:212px;font-size:8.0px;line-height:8.0px;color:#2f8a3a;font-weight:normal;font-family:'Liberation Sans', sans-serif;transform:scale(1.0041,1.1);transform-origin:0 6px;">Singlecast</div>
<div class="t" style="left:392.48px;top:212px;font-size:8.0px;line-height:8.0px;color:#2f8a3a;font-weight:normal;font-family:'Liberation Sans', sans-serif;transform:scale(1.0339,1.1);transform-origin:0 6px;">Multi Channel Association Set • S2ME</div>
<div class="t" style="left:539.35px;top:213px;font-size:7.77px;line-height:7.77px;color:#2f8a3a;font-weight:normal;font-family:'Liberation Mono', monospace;transform:scale(1.0034,1.12);transform-origin:0 5px;-webkit-text-stroke:0.1px currentColor;">C16F308C0141071C129F0368004EFFD5</div>
<div class="t" style="left:4.70px;top:224px;font-size:8.0px;line-height:8.0px;color:#3636f0;font-weight:normal;font-family:'Liberation Sans', sans-serif;transform:scale(1.0000,1.1);transform-origin:0 6px;">128</div>
<div class="t" style="left:29.99px;top:224px;font-size:8.0px;line-height:8.0px;color:#3636f0;font-weight:normal;font-family:'Liberation Sans', sans-serif;transform:scale(1.0165,1.1);transform-origin:0 6px;">19.10.22</div>
<div class="t" style="left:72.51px;top:224px;font-size:8.0px;line-height:8.0px;color:#3636f0;font-weight:normal;font-family:'Liberation Sans', sans-serif;transform:scale(0.9891,1.1);transform-origin:0 6px;">14:33:53.969</div>
<div class="t" style="left:132.50px;top:224px;font-size:8.0px;line-height:8.0px;color:#3636f0;font-weight:normal;font-family:'Liberation Sans', sans-serif;transform:scale(1.0000,1.1);transform-origin:0 6px;">100K</div>
<div class="t" style="left:171.25px;top:224px;font-size:8.0px;line-height:8.0px;color:#3636f0;font-weight:normal;font-family:'Liberation Sans', sans-serif;transform:scale(1.0000,1.1);transform-origin:0 6px;">64</div>
<div class="t" style="left:195.65px;top:224px;font-size:8.0px;line-height:8.0px;color:#3636f0;font-weight:normal;font-family:'Liberation Sans', sans-serif;transform:scale(1.0000,1.1);transform-origin:0 6px;">0</div>
<div class="t" style="left:207.25px;top:224px;font-size:8.0px;line-height:8.0px;color:#3636f0;font-weight:normal;font-family:'Liberation Sans', sans-serif;transform:scale(1.0000,1.1);transform-origin:0 6px;">6</div>
<div class="t" style="left:235.00px;top:224px;font-size:8.0px;line-height:8.0px;color:#3636f0;font-weight:normal;font-family:'Liberation Sans', sans-serif;transform:scale(1.0000,1.1);transform-origin:0 6px;">18</div>
<div class="t" style="left:264.00px;top:224px;font-size:8.0px;line-height:8.0px;color:#3636f0;font-weight:normal;font-family:'Liberation Sans', sans-serif;transform:scale(1.0000,1.1);transform-origin:0 6px;">1</div>
<div class="t" style="left:292.15px;top:225px;font-size:7.77px;line-height:7.77px;color:#3636f0;font-weight:normal;font-family:'Liberation Mono', monospace;transform:scale(1.0041,1.12);transform-origin:0 5px;-webkit-text-stroke:0.1px currentColor;">C16F308C</div>
<div class="t" style="left:341.20px;top:224px;font-size:8.0px;line-height:8.0px;color:#3636f0;font-weight:normal;font-family:'Liberation Sans', sans-serif;transform:scale(1.0189,1.1);transform-origin:0 6px;">Ack</div>
<div class="t" style="left:539.35px;top:225px;font-size:7.77px;line-height:7.77px;color:#3636f0;font-weight:normal;font-family:'Liberation Mono', monospace;transform:scale(1.0049,1.12);transform-origin:0 5px;-webkit-text-stroke:0.1px currentColor;">C16F308C1203070B019F3D</div>
<div class="t" style="left:4.70px;top:235px;font-size:8.0px;line-height:8.0px;color:#2f8a3a;font-weight:normal;font-family:'Liberation Sans', sans-serif;transform:scale(1.0000,1.1);transform-origin:0 6px;">129</div>
<div class="t" style="left:29.99px;top:235px;font-size:8.0px;line-height:8.0px;color:#2f8a3a;font-weight:normal;font-family:'Liberation Sans', sans-serif;transform:scale(1.0165,1.1);transform-origin:0 6px;">19.10.22</div>
<div class="t" style="left:72.51px;top:235px;font-size:8.0px;line-height:8.0px;color:#2f8a3a;font-weight:normal;font-family:'Liberation Sans', sans-serif;transform:scale(0.9891,1.1);transform-origin:0 6px;">14:34:02.028</div>
<div class="t" style="left:132.50px;top:235px;font-size:8.0px;line-height:8.0px;color:#2f8a3a;font-weight:normal;font-family:'Liberation Sans', sans-serif;transform:scale(1.0000,1.1);transform-origin:0 6px;">100K</div>
<div class="t" style="left:171.25px;top:235px;font-size:8.0px;line-height:8.0px;color:#2f8a3a;font-weight:normal;font-family:'Liberation Sans', sans-serif;transform:scale(1.0000,1.1);transform-origin:0 6px;">84</div>
<div class="t" style="left:195.65px;top:235px;font-size:8.0px;line-height:8.0px;color:#2f8a3a;font-weight:normal;font-family:'Liberation Sans', sans-serif;transform:scale(1.0000,1.1);transform-origin:0 6px;">0</div>
<div class="t" style="left:207.25px;top:235px;font-size:8.0px;line-height:8.0px;color:#2f8a3a;font-weight:normal;font-family:'Liberation Sans', sans-serif;transform:scale(1.0000,1.1);transform-origin:0 6px;">8056</div>
<div class="t" style="left:235.00px;top:235px;font-size:8.0px;line-height:8.0px;color:#2f8a3a;font-weight:normal;font-family:'Liberation Sans', sans-serif;transform:scale(1.0000,1.1);transform-origin:0 6px;">1</div>
<div class="t" style="left:264.00px;top:235px;font-size:8.0px;line-height:8.0px;color:#2f8a3a;font-weight:normal;font-family:'Liberation Sans', sans-serif;transform:scale(1.0000,1.1);transform-origin:0 6px;">18</div>
<div class="t" style="left:292.15px;top:237px;font-size:7.77px;line-height:7.77px;color:#2f8a3a;font-weight:normal;font-family:'Liberation Mono', monospace;transform:scale(1.0041,1.12);transform-origin:0 5px;-webkit-text-stroke:0.1px currentColor;">C16F308C</div>
<div class="t" style="left:340.95px;top:235px;font-size:8.0px;line-height:8.0px;color:#2f8a3a;font-weight:normal;font-family:'Liberation Sans', sans-serif;transform:scale(1.0041,1.1);transform-origin:0 6px;">Singlecast</div>
<div class="t" style="left:392.51px;top:235px;font-size:8.0px;line-height:8.0px;color:#2f8a3a;font-weight:normal;font-family:'Liberation Sans', sans-serif;transform:scale(0.9879,1.1);transform-origin:0 6px;">Basic Set • S2ME</div>
<div class="t" style="left:539.35px;top:237px;font-size:7.77px;line-height:7.77px;color:#2f8a3a;font-weight:normal;font-family:'Liberation Mono', monospace;transform:scale(1.0017,1.12);transform-origin:0 5px;-webkit-text-stroke:0.1px currentColor;">C16F308C0141081A129F0369007352AB</div>
<div class="t" style="left:4.70px;top:247px;font-size:8.0px;line-height:8.0px;color:#3636f0;font-weight:normal;font-family:'Liberation Sans', sans-serif;transform:scale(1.0000,1.1);transform-origin:0 6px;">130</div>
<div class="t" style="left:29.99px;top:247px;font-size:8.0px;line-height:8.0px;color:#3636f0;font-weight:normal;font-family:'Liberation Sans', sans-serif;transform:scale(1.0165,1.1);transform-origin:0 6px;">19.10.22</div>
<div class="t" style="left:72.51px;top:247px;font-size:8.0px;line-height:8.0px;color:#3636f0;font-weight:normal;font-family:'Liberation Sans', sans-serif;transform:scale(0.9891,1.1);transform-origin:0 6px;">14:34:02.032</div>
<div class="t" style="left:132.50px;top:247px;font-size:8.0px;line-height:8.0px;color:#3636f0;font-weight:normal;font-family:'Liberation Sans', sans-serif;transform:scale(1.0000,1.1);transform-origin:0 6px;">100K</div>
<div class="t" style="left:171.25px;top:247px;font-size:8.0px;line-height:8.0px;color:#3636f0;font-weight:normal;font-family:'Liberation Sans', sans-serif;transform:scale(1.0000,1.1);transform-origin:0 6px;">64</div>
<div class="t" style="left:195.65px;top:247px;font-size:8.0px;line-height:8.0px;color:#3636f0;font-weight:normal;font-family:'Liberation Sans', sans-serif;transform:scale(1.0000,1.1);transform-origin:0 6px;">0</div>
<div class="t" style="left:207.25px;top:247px;font-size:8.0px;line-height:8.0px;color:#3636f0;font-weight:normal;font-family:'Liberation Sans', sans-serif;transform:scale(1.0000,1.1);transform-origin:0 6px;">6</div>
<div class="t" style="left:235.00px;top:247px;font-size:8.0px;line-height:8.0px;color:#3636f0;font-weight:normal;font-family:'Liberation Sans', sans-serif;transform:scale(1.0000,1.1);transform-origin:0 6px;">18</div>
<div class="t" style="left:264.00px;top:247px;font-size:8.0px;line-height:8.0px;color:#3636f0;font-weight:normal;font-family:'Liberation Sans', sans-serif;transform:scale(1.0000,1.1);transform-origin:0 6px;">1</div>
<div class="t" style="left:292.15px;top:248px;font-size:7.77px;line-height:7.77px;color:#3636f0;font-weight:normal;font-family:'Liberation Mono', monospace;transform:scale(1.0041,1.12);transform-origin:0 5px;-webkit-text-stroke:0.1px currentColor;">C16F308C</div>
<div class="t" style="left:341.20px;top:247px;font-size:8.0px;line-height:8.0px;color:#3636f0;font-weight:normal;font-family:'Liberation Sans', sans-serif;transform:scale(1.0189,1.1);transform-origin:0 6px;">Ack</div>
<div class="t" style="left:539.35px;top:248px;font-size:7.77px;line-height:7.77px;color:#3636f0;font-weight:normal;font-family:'Liberation Mono', monospace;transform:scale(1.0049,1.12);transform-origin:0 5px;-webkit-text-stroke:0.1px currentColor;">C16F308C1203080B01B30C</div>
<div style="left:692.00px;top:240.30px;width:6.80px;height:22.00px;background:#72a6be;"></div>
<div style="left:0.00px;top:261.80px;width:700.00px;height:2.00px;background:#66a6c3;"></div>
<div style="left:1.00px;top:263.80px;width:697.60px;height:229.50px;background:#ffffff;"></div>
<div style="left:180.60px;top:263.80px;width:0.90px;height:229.50px;background:#ececec;"></div>
<div style="left:403.90px;top:263.80px;width:0.90px;height:229.50px;background:#ececec;"></div>
<div class="t" style="left:2.55px;top:269px;font-size:8px;line-height:8px;color:#142740;font-weight:bold;font-family:'Liberation Sans', sans-serif;transform:scale(1.0088,1.16);transform-origin:0 6px;-webkit-text-stroke:0.35px currentColor;">Singlecast</div>
<div class="t" style="left:14.87px;top:282px;font-size:8px;line-height:8px;color:#3a3a3a;font-weight:normal;font-family:'Liberation Sans', sans-serif;transform:scale(1.0504,1.1);transform-origin:0 6px;-webkit-text-stroke:0.05px currentColor;">Home ID:</div>
<div class="t" style="left:131.25px;top:282px;font-size:8px;line-height:8px;color:#3a3a3a;font-weight:normal;font-family:'Liberation Sans', sans-serif;transform:scale(0.9877,1.1);transform-origin:0 6px;-webkit-text-stroke:0.05px currentColor;">C1 6F 30 8C</div>
<div class="t" style="left:14.94px;top:294px;font-size:8px;line-height:8px;color:#3a3a3a;font-weight:normal;font-family:'Liberation Sans', sans-serif;transform:scale(1.0403,1.1);transform-origin:0 6px;-webkit-text-stroke:0.05px currentColor;">Source Node ID:</div>
<div class="t" style="left:131.50px;top:294px;font-size:8px;line-height:8px;color:#3a3a3a;font-weight:normal;font-family:'Liberation Sans', sans-serif;transform:scale(1.0000,1.1);transform-origin:0 6px;-webkit-text-stroke:0.05px currentColor;">1</div>
<div class="t" style="left:14.68px;top:306px;font-size:8px;line-height:8px;color:#3a3a3a;font-weight:normal;font-family:'Liberation Sans', sans-serif;transform:scale(1.0452,1.1);transform-origin:0 6px;-webkit-text-stroke:0.05px currentColor;">Properties1:</div>
<div class="t" style="left:131.34px;top:306px;font-size:8px;line-height:8px;color:#3a3a3a;font-weight:normal;font-family:'Liberation Sans', sans-serif;transform:scale(1.0448,1.1);transform-origin:0 6px;-webkit-text-stroke:0.05px currentColor;">0x41</div>
<div class="t" style="left:19.28px;top:319px;font-size:8px;line-height:8px;color:#3a3a3a;font-weight:normal;font-family:'Liberation Sans', sans-serif;transform:scale(1.0439,1.1);transform-origin:0 6px;-webkit-text-stroke:0.05px currentColor;">Header Type:</div>
<div class="t" style="left:135.94px;top:319px;font-size:8px;line-height:8px;color:#3a3a3a;font-weight:normal;font-family:'Liberation Sans', sans-serif;transform:scale(1.0328,1.1);transform-origin:0 6px;-webkit-text-stroke:0.05px currentColor;">0x01</div>
<div class="t" style="left:19.53px;top:331px;font-size:8px;line-height:8px;color:#3a3a3a;font-weight:normal;font-family:'Liberation Sans', sans-serif;transform:scale(1.0684,1.1);transform-origin:0 6px;-webkit-text-stroke:0.05px currentColor;">Speed Modified:</div>
<div class="t" style="left:136.20px;top:331px;font-size:8px;line-height:8px;color:#3a3a3a;font-weight:normal;font-family:'Liberation Sans', sans-serif;transform:scale(1.0328,1.1);transform-origin:0 6px;-webkit-text-stroke:0.05px currentColor;">false</div>
<div class="t" style="left:19.28px;top:344px;font-size:8px;line-height:8px;color:#3a3a3a;font-weight:normal;font-family:'Liberation Sans', sans-serif;transform:scale(1.0405,1.1);transform-origin:0 6px;-webkit-text-stroke:0.05px currentColor;">Low Power:</div>
<div class="t" style="left:136.20px;top:344px;font-size:8px;line-height:8px;color:#3a3a3a;font-weight:normal;font-family:'Liberation Sans', sans-serif;transform:scale(1.0328,1.1);transform-origin:0 6px;-webkit-text-stroke:0.05px currentColor;">false</div>
<div class="t" style="left:19.80px;top:356px;font-size:8px;line-height:8px;color:#3a3a3a;font-weight:normal;font-family:'Liberation Sans', sans-serif;transform:scale(1.0267,1.1);transform-origin:0 6px;-webkit-text-stroke:0.05px currentColor;">Ack:</div>
<div class="t" style="left:136.20px;top:356px;font-size:8px;line-height:8px;color:#3a3a3a;font-weight:normal;font-family:'Liberation Sans', sans-serif;transform:scale(1.1481,1.1);transform-origin:0 6px;-webkit-text-stroke:0.05px currentColor;">true</div>
<div class="t" style="left:19.26px;top:368px;font-size:8px;line-height:8px;color:#3a3a3a;font-weight:normal;font-family:'Liberation Sans', sans-serif;transform:scale(1.0741,1.1);transform-origin:0 6px;-webkit-text-stroke:0.05px currentColor;">Routed:</div>
<div class="t" style="left:136.20px;top:368px;font-size:8px;line-height:8px;color:#3a3a3a;font-weight:normal;font-family:'Liberation Sans', sans-serif;transform:scale(1.0328,1.1);transform-origin:0 6px;-webkit-text-stroke:0.05px currentColor;">false</div>
<div class="t" style="left:14.67px;top:381px;font-size:8px;line-height:8px;color:#3a3a3a;font-weight:normal;font-family:'Liberation Sans', sans-serif;transform:scale(1.0571,1.1);transform-origin:0 6px;-webkit-text-stroke:0.05px currentColor;">Properties2:</div>
<div class="t" style="left:131.34px;top:381px;font-size:8px;line-height:8px;color:#3a3a3a;font-weight:normal;font-family:'Liberation Sans', sans-serif;transform:scale(1.0448,1.1);transform-origin:0 6px;-webkit-text-stroke:0.05px currentColor;">0x08</div>
<div class="t" style="left:19.54px;top:393px;font-size:8px;line-height:8px;color:#3a3a3a;font-weight:normal;font-family:'Liberation Sans', sans-serif;transform:scale(1.0471,1.1);transform-origin:0 6px;-webkit-text-stroke:0.05px currentColor;">Sequence Number:</div>
<div class="t" style="left:136.45px;top:393px;font-size:8px;line-height:8px;color:#3a3a3a;font-weight:normal;font-family:'Liberation Sans', sans-serif;transform:scale(1.0000,1.1);transform-origin:0 6px;-webkit-text-stroke:0.05px currentColor;">8</div>
<div class="t" style="left:19.30px;top:406px;font-size:8px;line-height:8px;color:#3a3a3a;font-weight:normal;font-family:'Liberation Sans', sans-serif;transform:scale(1.0071,1.1);transform-origin:0 6px;-webkit-text-stroke:0.05px currentColor;">Reserved:</div>
<div class="t" style="left:136.20px;top:406px;font-size:8px;line-height:8px;color:#3a3a3a;font-weight:normal;font-family:'Liberation Sans', sans-serif;transform:scale(1.0328,1.1);transform-origin:0 6px;-webkit-text-stroke:0.05px currentColor;">false</div>
<div class="t" style="left:19.54px;top:418px;font-size:8px;line-height:8px;color:#3a3a3a;font-weight:normal;font-family:'Liberation Sans', sans-serif;transform:scale(1.0228,1.1);transform-origin:0 6px;-webkit-text-stroke:0.05px currentColor;">Source Wakeup Beam 250ms:</div>
<div class="t" style="left:136.20px;top:418px;font-size:8px;line-height:8px;color:#3a3a3a;font-weight:normal;font-family:'Liberation Sans', sans-serif;transform:scale(1.0328,1.1);transform-origin:0 6px;-webkit-text-stroke:0.05px currentColor;">false</div>
<div class="t" style="left:19.80px;top:431px;font-size:8px;line-height:8px;color:#3a3a3a;font-weight:normal;font-family:'Liberation Sans', sans-serif;transform:scale(1.0214,1.1);transform-origin:0 6px;-webkit-text-stroke:0.05px currentColor;">Wakeup Source Beam 1000ms:</div>
<div class="t" style="left:136.20px;top:431px;font-size:8px;line-height:8px;color:#3a3a3a;font-weight:normal;font-family:'Liberation Sans', sans-serif;transform:scale(1.0328,1.1);transform-origin:0 6px;-webkit-text-stroke:0.05px currentColor;">false</div>
<div class="t" style="left:19.56px;top:443px;font-size:8px;line-height:8px;color:#3a3a3a;font-weight:normal;font-family:'Liberation Sans', sans-serif;transform:scale(0.9792,1.1);transform-origin:0 6px;-webkit-text-stroke:0.05px currentColor;">SUC Present:</div>
<div class="t" style="left:136.20px;top:443px;font-size:8px;line-height:8px;color:#3a3a3a;font-weight:normal;font-family:'Liberation Sans', sans-serif;transform:scale(1.0328,1.1);transform-origin:0 6px;-webkit-text-stroke:0.05px currentColor;">false</div>
<div class="t" style="left:14.66px;top:455px;font-size:8px;line-height:8px;color:#3a3a3a;font-weight:normal;font-family:'Liberation Sans', sans-serif;transform:scale(1.0863,1.1);transform-origin:0 6px;-webkit-text-stroke:0.05px currentColor;">Length:</div>
<div class="t" style="left:131.34px;top:455px;font-size:8px;line-height:8px;color:#3a3a3a;font-weight:normal;font-family:'Liberation Sans', sans-serif;transform:scale(1.0588,1.1);transform-origin:0 6px;-webkit-text-stroke:0.05px currentColor;">26</div>
<div class="t" style="left:14.67px;top:468px;font-size:8px;line-height:8px;color:#3a3a3a;font-weight:normal;font-family:'Liberation Sans', sans-serif;transform:scale(1.0625,1.1);transform-origin:0 6px;-webkit-text-stroke:0.05px currentColor;">Destination Node ID:</div>
<div class="t" style="left:131.05px;top:468px;font-size:8px;line-height:8px;color:#3a3a3a;font-weight:normal;font-family:'Liberation Sans', sans-serif;transform:scale(1.0909,1.1);transform-origin:0 6px;-webkit-text-stroke:0.05px currentColor;">18</div>
<div class="t" style="left:139.66px;top:480px;font-size:10px;line-height:10px;color:#dde7f0;font-weight:bold;font-family:'Liberation Sans', sans-serif;transform:scale(1.0827,1.1);transform-origin:0 8px;-webkit-text-stroke:0.35px currentColor;">Header</div>
<div class="t" style="left:340.93px;top:480px;font-size:10px;line-height:10px;color:#dde7f0;font-weight:bold;font-family:'Liberation Sans', sans-serif;transform:scale(1.0772,1.1);transform-origin:0 8px;-webkit-text-stroke:0.35px currentColor;">Application</div>
<div class="t" style="left:184.05px;top:269px;font-size:8px;line-height:8px;color:#142740;font-weight:bold;font-family:'Liberation Sans', sans-serif;transform:scale(0.9854,1.16);transform-origin:0 6px;-webkit-text-stroke:0.35px currentColor;">Command Class Basic</div>
<div class="t" style="left:272.30px;top:269px;font-size:8px;line-height:8px;color:#5a5a5a;font-weight:normal;font-family:'Liberation Sans', sans-serif;transform:scale(1.0588,1.1);transform-origin:0 6px;-webkit-text-stroke:0.05px currentColor;">ver.2</div>
<div class="t" style="left:183.82px;top:282px;font-size:8px;line-height:8px;color:#142740;font-weight:bold;font-family:'Liberation Sans', sans-serif;transform:scale(0.9634,1.16);transform-origin:0 6px;-webkit-text-stroke:0.35px currentColor;">Basic Set</div>
<div class="t" style="left:196.30px;top:294px;font-size:8px;line-height:8px;color:#3a3a3a;font-weight:normal;font-family:'Liberation Sans', sans-serif;transform:scale(0.9928,1.1);transform-origin:0 6px;-webkit-text-stroke:0.05px currentColor;">Value: 0x00</div>
<div class="t" style="left:294.05px;top:269px;font-size:8px;line-height:8px;color:#142740;font-weight:bold;font-family:'Liberation Sans', sans-serif;transform:scale(0.9854,1.16);transform-origin:0 6px;-webkit-text-stroke:0.35px currentColor;">Command Class Basic</div>
<div class="t" style="left:382.30px;top:269px;font-size:8px;line-height:8px;color:#5a5a5a;font-weight:normal;font-family:'Liberation Sans', sans-serif;transform:scale(1.0118,1.1);transform-origin:0 6px;-webkit-text-stroke:0.05px currentColor;">ver.1</div>
<div class="t" style="left:293.82px;top:282px;font-size:8px;line-height:8px;color:#142740;font-weight:bold;font-family:'Liberation Sans', sans-serif;transform:scale(0.9634,1.16);transform-origin:0 6px;-webkit-text-stroke:0.35px currentColor;">Basic Set</div>
<div class="t" style="left:306.30px;top:294px;font-size:8px;line-height:8px;color:#3a3a3a;font-weight:normal;font-family:'Liberation Sans', sans-serif;transform:scale(0.9928,1.1);transform-origin:0 6px;-webkit-text-stroke:0.05px currentColor;">Value: 0x00</div>
<div class="t" style="left:418.37px;top:282px;font-size:8px;line-height:8px;color:#3a3a3a;font-weight:normal;font-family:'Liberation Sans', sans-serif;transform:scale(1.0602,1.1);transform-origin:0 6px;-webkit-text-stroke:0.05px currentColor;">Network Key:</div>
<div class="t" style="left:480.80px;top:282px;font-size:8px;line-height:8px;color:#3a3a3a;font-weight:normal;font-family:'Liberation Sans', sans-serif;transform:scale(0.9893,1.1);transform-origin:0 6px;-webkit-text-stroke:0.05px currentColor;">A2 68 D7 86 2B 57 56 05 FE E9 DD 4B B0 59 B3 6C</div>
<div class="t" style="left:418.38px;top:294px;font-size:8px;line-height:8px;color:#3a3a3a;font-weight:normal;font-family:'Liberation Sans', sans-serif;transform:scale(1.0345,1.1);transform-origin:0 6px;-webkit-text-stroke:0.05px currentColor;">Receiver Nonce:</div>
<div class="t" style="left:480.56px;top:294px;font-size:8px;line-height:8px;color:#3a3a3a;font-weight:normal;font-family:'Liberation Sans', sans-serif;transform:scale(0.9681,1.1);transform-origin:0 6px;-webkit-text-stroke:0.05px currentColor;">36 FF CE DF D5 B1 BE 3B 7F 53 8E 2E 74 60 0D C6</div>
<div class="t" style="left:418.64px;top:307px;font-size:8px;line-height:8px;color:#3a3a3a;font-weight:normal;font-family:'Liberation Sans', sans-serif;transform:scale(1.0210,1.1);transform-origin:0 6px;-webkit-text-stroke:0.05px currentColor;">Sender Nonce:</div>
<div class="t" style="left:480.55px;top:307px;font-size:8px;line-height:8px;color:#3a3a3a;font-weight:normal;font-family:'Liberation Sans', sans-serif;transform:scale(0.9873,1.1);transform-origin:0 6px;-webkit-text-stroke:0.05px currentColor;">21 F2 55 E3 DB FC AC 1E A5 43 52 18 14 B7 19 B1</div>
<div class="t" style="left:418.62px;top:319px;font-size:8px;line-height:8px;color:#3a3a3a;font-weight:normal;font-family:'Liberation Sans', sans-serif;transform:scale(1.1282,1.1);transform-origin:0 6px;-webkit-text-stroke:0.05px currentColor;">Content:</div>
<div class="t" style="left:480.54px;top:319px;font-size:8px;line-height:8px;color:#3a3a3a;font-weight:normal;font-family:'Liberation Sans', sans-serif;transform:scale(1.0439,1.1);transform-origin:0 6px;-webkit-text-stroke:0.05px currentColor;">20 01 00</div>
<div style="left:1.00px;top:494.00px;width:697.60px;height:11.70px;background:#e4e4e4;"></div>
<div class="t" style="left:5.25px;top:498px;font-size:8px;line-height:8px;color:#333333;font-weight:normal;font-family:'Liberation Sans', sans-serif;transform:scale(0.9992,1.1);transform-origin:0 6px;-webkit-text-stroke:0.05px currentColor;">C1 6F 30 8C 01 41 08 1A 12 9F 03 69 00 73 52 AB 5B 77 6F 5B DB AF 1C F2 B4 17</div>
<div style="left:1.00px;top:505.70px;width:697.60px;height:15.80px;background:#f0f0f0;"></div>
<div class="t" style="left:5.49px;top:512px;font-size:8px;line-height:8px;color:#333333;font-weight:normal;font-family:'Liberation Sans', sans-serif;transform:scale(1.0145,1.1);transform-origin:0 6px;-webkit-text-stroke:0.05px currentColor;">Frames: 130 (12 frames/sec: 897 B/sec)</div>
<div class="t" style="left:163.79px;top:512px;font-size:8px;line-height:8px;color:#333333;font-weight:normal;font-family:'Liberation Sans', sans-serif;transform:scale(1.0189,1.1);transform-origin:0 6px;-webkit-text-stroke:0.05px currentColor;">Ln 129</div>
<div class="t" style="left:480.70px;top:512px;font-size:8px;line-height:8px;color:#333333;font-weight:normal;font-family:'Liberation Sans', sans-serif;transform:scale(1.0034,1.1);transform-origin:0 6px;-webkit-text-stroke:0.05px currentColor;">Port: COM7 Rate_230400 kbps, ver: 2.55</div>
<div class="t" style="left:642.00px;top:512px;font-size:8px;line-height:8px;color:#333333;font-weight:normal;font-family:'Liberation Sans', sans-serif;transform:scale(1.0010,1.1);transform-origin:0 6px;-webkit-text-stroke:0.05px currentColor;">Frequency: EU</div>
<div style="left:0.00px;top:18.00px;width:1.00px;height:505.00px;background:#4a9fa0;"></div>
<div style="left:698.90px;top:18.00px;width:1.10px;height:505.00px;background:#4a9fa0;"></div>
<div style="left:0.00px;top:521.50px;width:700.00px;height:1.50px;background:#4a9fa0;"></div>
<svg style="left:0;top:0" width="700" height="523" viewBox="0 0 700 523"><g>
<rect x="5.2" y="4.1" width="9.8" height="9.8" fill="#fbfbf8"/>
<rect x="5.2" y="5" width="9.8" height="1.2" fill="#eef3c8"/>
<rect x="5.2" y="6.2" width="9.8" height="2.6" fill="#d8f0f4"/>
<rect x="5.2" y="8.8" width="9.8" height="1.2" fill="#eef3c8"/>
<rect x="5.2" y="4.1" width="9.8" height="0.9" fill="#102a66"/>
<path d="M7.6 10.4 L11.6 6.4" stroke="#4a5a90" stroke-width="1.5" stroke-dasharray="1.2 0.5"/>
<circle cx="12.2" cy="11.1" r="1.55" fill="#ffffff" stroke="#1c2858" stroke-width="1.2"/>
</g>
<path d="M627.4 9.3 H633.8" stroke="#e6f2f2" stroke-width="0.9"/>
<rect x="654.7" y="6.6" width="5.9" height="5.6" fill="none" stroke="#e6f2f2" stroke-width="0.9"/>
<path d="M682.3 6.1 L688.7 12.5 M688.7 6.1 L682.3 12.5" stroke="#eef8f8" stroke-width="0.9"/>
<path d="M5.6 36.9 H10.3 L13.1 39.7 V46.2 Q13.1 46.9 12.4 46.9 H5.6 Q4.9 46.9 4.9 46.2 V37.6 Q4.9 36.9 5.6 36.9 Z" fill="#1f6a9b"/>
<circle cx="10.7" cy="39.4" r="0.9" fill="#e8eef2"/>
<path d="M21.5 38 H25 L26 39.3 H30.3 Q30.9 39.3 30.9 39.9 V45.4 Q30.9 46 30.3 46 H21.5 Q20.9 46 20.9 45.4 V38.6 Q20.9 38 21.5 38 Z" fill="#1f6a9b"/>
<path d="M38.6 37.1 H46 L47.7 38.8 V45.7 Q47.7 46.3 47.1 46.3 H38.6 Q38 46.3 38 45.7 V37.7 Q38 37.1 38.6 37.1 Z" fill="#1f6a9b"/>
<rect x="39.6" y="38.6" width="6.1" height="1.7" rx="0.3" fill="#f2f2f2"/><circle cx="42.9" cy="43.7" r="1.5" fill="#f2f2f2"/>
<path d="M55.4 36.9 H63.8 Q64.6 36.9 64.6 37.7 V44.3 Q64.6 45.1 63.8 45.1 H59.5 L58.4 46.9 L57.3 45.1 H55.4 Q54.6 45.1 54.6 44.3 V37.7 Q54.6 36.9 55.4 36.9 Z" fill="#1f6a9b"/>
<path d="M56.3 39.1 H63 M56.3 40.5 H63 M56.3 41.9 H59.9 M56.3 43.2 H59.9" stroke="#b0c8da" stroke-width="1"/>
<path d="M69.6 35.4 V48.6 M140.2 35.4 V48.6" stroke="#b4c2cc" stroke-width="0.9"/>
<path d="M77 38.9 L83.3 42.2 L77 45.5 Z" fill="#1f6a9b"/>
<rect x="93" y="38.9" width="2.2" height="6.6" fill="#c4c4c4"/><rect x="97.7" y="38.9" width="2.2" height="6.6" fill="#c4c4c4"/>
<rect x="110" y="38.9" width="6.4" height="6.6" fill="#c4c4c4"/>
<path d="M127.2 40.2 A3.6 3.6 0 1 0 130.4 38.6" stroke="#c4c4c4" stroke-width="1.1" fill="none"/><path d="M128.8 37 L131.3 38.7 L129 40.4 Z" fill="#c4c4c4"/>
<rect x="146.3" y="38.5" width="8.1" height="7.4" fill="#a9c3d6" stroke="#1f6a9b" stroke-width="1.2"/>
<path d="M147 40.6 H153.7 M147 42.3 H153.7 M147 44 H153.7" stroke="#8fb0c8" stroke-width="0.6"/>
<path d="M170.7 38.3 V43.6 H164.6" stroke="#1f6a9b" stroke-width="1.1" fill="none"/><path d="M166.8 41.2 L164.2 43.6 L166.8 46" stroke="#1f6a9b" stroke-width="1.1" fill="none"/>
<path d="M180.3 37.2 H185.3 L188.2 40.1 V46.2 Q188.2 46.9 187.5 46.9 H180.3 Q179.6 46.9 179.6 46.2 V37.9 Q179.6 37.2 180.3 37.2 Z" fill="#1f6a9b"/>
<circle cx="184" cy="42.5" r="2" fill="none" stroke="#eef2f5" stroke-width="1"/><path d="M185.4 43.9 L187 45.5" stroke="#eef2f5" stroke-width="1"/>
<path d="M195.7 37.9 H203.2 L200.2 41.5 V45.8 L198.7 45 V41.5 Z" fill="#c4c4c4"/>
<path d="M202.3 43.6 L205.6 46.6 M205.6 43.6 L202.3 46.6" stroke="#c4c4c4" stroke-width="0.8"/>
<path d="M213.9 37.9 H221.8 L218.6 41.5 V45.8 L217.1 45 V41.5 Z" fill="#c4c4c4"/>
<path d="M228.8 46.7 H231.6 L230.2 48 Z M448.4 46.7 H451.2 L449.8 48 Z" fill="#707070"/>
<path d="M261 40.8 H265.4 L263.2 43.2 Z" fill="#1f6a9b"/>
<path d="M275.8 37.5 V42.6" stroke="#1f6a9b" stroke-width="1.2"/><path d="M273.9 41.6 L275.8 43.9 L277.7 41.6 Z" fill="#1f6a9b"/><path d="M272 45.8 H279.9" stroke="#1f6a9b" stroke-width="1.4"/>
<path d="M288.2 39.1 H297.3 M288.2 41.9 H295.4 Q297.6 41.9 297.6 43.4 Q297.6 44.9 295.4 44.9 H293.2 M288.2 44.9 H291" stroke="#1f6a9b" stroke-width="1.05" fill="none"/><circle cx="294" cy="44.9" r="0.9" fill="#1f6a9b"/>
<path d="M362.7 40.5 H367.1 L364.9 42.9 Z" fill="#1f6a9b"/>
<circle cx="377.3" cy="41.5" r="4.85" fill="#1f6a9b"/>
<text x="377.3" y="44.6" text-anchor="middle" font-family="Liberation Sans" font-weight="bold" font-size="8.5" fill="#fff">?</text>
<path d="M390.6 42 H397.4 M394 38.6 V45.4" stroke="#1f6a9b" stroke-width="1.35"/>
<path d="M439.7 40.8 H444.1 L441.9 43.2 Z" fill="#1f6a9b"/>
<path d="M131.79999999999998 57 H137.29999999999998 V57.8 Q137.29999999999998 58.4 135.5 60.2 V62.2 Q134.54999999999998 62.9 133.6 62.2 V60.2 Q131.79999999999998 58.4 131.79999999999998 57.8 Z" fill="#1f6a9b"/>
<path d="M171.1 57 H176.6 V57.8 Q176.6 58.4 174.8 60.2 V62.2 Q173.85 62.9 172.9 62.2 V60.2 Q171.1 58.4 171.1 57.8 Z" fill="#1f6a9b"/>
<path d="M234.4 57 H239.9 V57.8 Q239.9 58.4 238.10000000000002 60.2 V62.2 Q237.15 62.9 236.20000000000002 62.2 V60.2 Q234.4 58.4 234.4 57.8 Z" fill="#1f6a9b"/>
<path d="M263.0 57 H268.5 V57.8 Q268.5 58.4 266.7 60.2 V62.2 Q265.75 62.9 264.79999999999995 62.2 V60.2 Q263.0 58.4 263.0 57.8 Z" fill="#1f6a9b"/>
<path d="M293.40000000000003 57 H298.90000000000003 V57.8 Q298.90000000000003 58.4 297.1 60.2 V62.2 Q296.15000000000003 62.9 295.2 62.2 V60.2 Q293.40000000000003 58.4 293.40000000000003 57.8 Z" fill="#1f6a9b"/>
<path d="M342.0 57 H347.5 V57.8 Q347.5 58.4 345.7 60.2 V62.2 Q344.75 62.9 343.79999999999995 62.2 V60.2 Q342.0 58.4 342.0 57.8 Z" fill="#1f6a9b"/>
<path d="M393.3 57 H398.8 V57.8 Q398.8 58.4 397.0 60.2 V62.2 Q396.05 62.9 395.09999999999997 62.2 V60.2 Q393.3 58.4 393.3 57.8 Z" fill="#1f6a9b"/>
<path d="M540.8000000000001 57 H546.3000000000001 V57.8 Q546.3000000000001 58.4 544.5 60.2 V62.2 Q543.5500000000001 62.9 542.6 62.2 V60.2 Q540.8000000000001 58.4 540.8000000000001 57.8 Z" fill="#1f6a9b"/>
<path d="M4.9 309.42 H9.3 L7.1 311.82 Z" fill="#1f6a9b"/>
<path d="M4.9 383.88 H9.3 L7.1 386.28 Z" fill="#1f6a9b"/></svg>
</body></html>
